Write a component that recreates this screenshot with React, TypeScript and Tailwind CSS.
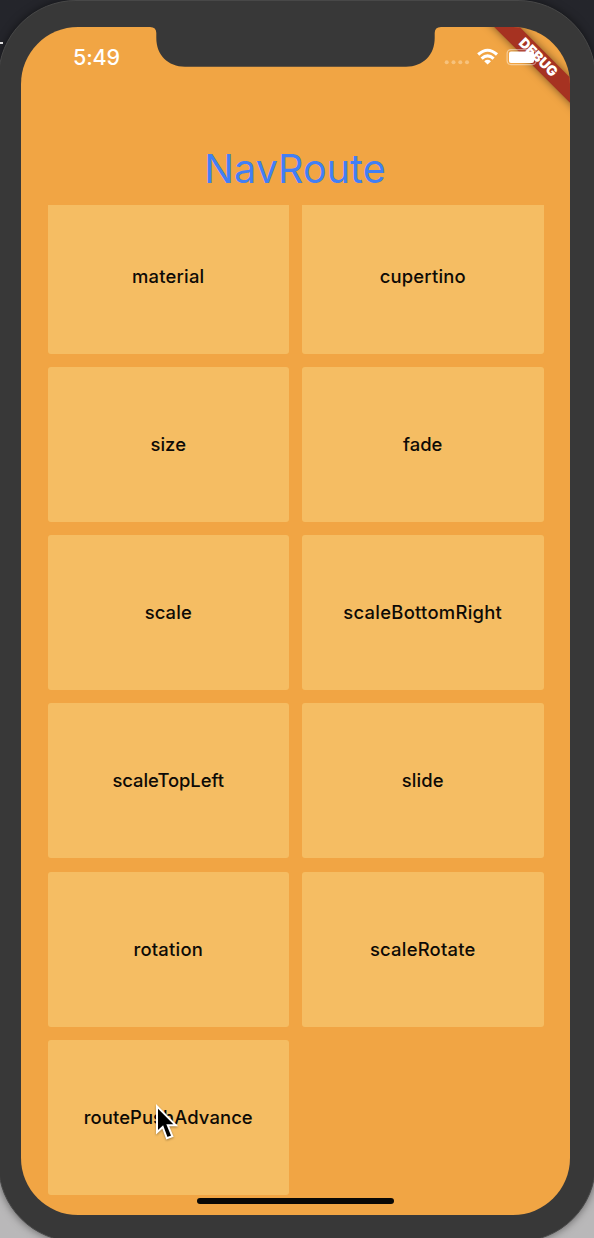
const routes = [
  { name: 'material', spacing: 'tracking-[0.2px]' },
  { name: 'cupertino', spacing: 'tracking-[0.2px]' },
  { name: 'size', spacing: 'tracking-[0.05px]' },
  { name: 'fade', spacing: 'tracking-[0.05px]' },
  { name: 'scale', spacing: 'tracking-[0.1px]' },
  { name: 'scaleBottomRight', spacing: 'tracking-[0.28px]' },
  { name: 'scaleTopLeft', spacing: 'tracking-[-0.04px]' },
  { name: 'slide', spacing: 'tracking-[0.15px]' },
  { name: 'rotation', spacing: 'tracking-[0.24px]' },
  { name: 'scaleRotate', spacing: 'tracking-[0.24px]' },
  { name: 'routePushAdvance', spacing: 'tracking-[0.1px]' },
];

function Notch() {
  return (
    <svg className="h-10 w-[297px] shrink-0" viewBox="0 0 297 40">
      <path
        d="M0 0H3Q9.3 0 9.3 6V11C9.3 28 21 39.7 38 39.7H259C276 39.7 287.7 28 287.7 11V6Q287.7 0 294 0Z"
        fill="#383838"
      />
    </svg>
  );
}

function StatusIcons() {
  return (
    <svg className="relative z-10 mt-4 -ml-1 h-7 w-[105px] shrink-0" viewBox="0 0 105 28">
      <g fill="#f7c27c">
        <circle cx="6.7" cy="19.2" r="2" />
        <circle cx="13.5" cy="19.2" r="2" />
        <circle cx="20.3" cy="19.2" r="2" />
        <circle cx="27" cy="19.2" r="2" />
      </g>
      <g fill="none" stroke="#fff" strokeWidth="3.1">
        <path d="M38.2 11.5Q47.6 3 57 11.5" />
        <path d="M41.6 15.6Q47.6 10.1 53.6 15.6" />
      </g>
      <path d="M44.2 18.3Q47.6 15.4 51 18.3L47.6 21.6Z" fill="#fff" />
      <rect
        x="67.1"
        y="6.6"
        width="29"
        height="15"
        rx="3.8"
        fill="none"
        stroke="#fff"
        strokeOpacity="0.45"
        strokeWidth="1.2"
      />
      <path d="M98 11.4Q100 11.9 100 14.1Q100 16.3 98 16.9Z" fill="#fff" fillOpacity="0.4" />
      <rect x="69" y="8.4" width="25" height="11.5" rx="2" fill="#fff" />
    </svg>
  );
}

function Cursor() {
  return (
    <svg
      className="absolute left-[154px] top-[1101px] drop-shadow-[0_1px_1px_rgba(0,0,0,0.35)]"
      width="28"
      height="42"
      viewBox="0 0 28 42"
    >
      <path d="M3 5.4V31.3L8.7 26L12.9 37.3L18.3 35.2L13.8 24.3H21.8Z" fill="#000" stroke="#fff" strokeWidth="2" />
    </svg>
  );
}

export default function App() {
  return (
    <div className="relative flex h-[1238px] w-[594px] items-start justify-center overflow-hidden bg-linear-to-b from-[#24252b] from-50% to-[#b9b8b9] to-90% font-['Inter',sans-serif]">
      <div className="absolute left-0 top-[42px] h-[2px] w-[3px] bg-[#dedede]" />
      <div className="flex h-[1242px] w-[598px] shrink-0 flex-col rounded-[78px] border border-[#484848] bg-[#383838] pl-[22px] pt-[26px] shadow-[0_0_8px_rgba(0,0,0,0.5)]">
        <main className="relative flex h-[1188px] w-[549px] flex-col overflow-hidden rounded-[57px] bg-[#f1a544]">
          <header className="flex h-[119px] items-start">
            <time className="w-[126px] shrink-0 pl-[52px] pt-[16px] text-[21.5px] font-medium leading-7 tracking-[-0.1px] text-white">
              5:49
            </time>
            <Notch />
            <StatusIcons />
          </header>
          <h1 className="h-[59px] pr-px text-center text-[39.5px] font-normal leading-[46px] tracking-[0.05px] text-[#427ff5]">
            NavRoute
          </h1>
          <section className="flex min-h-0 flex-1 items-end justify-center overflow-hidden pb-[20px]">
            <div className="grid w-[496px] shrink-0 grid-cols-2 gap-x-[13px] gap-y-[13.3px]">
              {routes.map(({ name, spacing }) => (
                <button
                  key={name}
                  className={`flex h-[155px] items-center justify-center rounded-[3px] bg-[#f5bd63] pb-px text-[18.4px] font-medium leading-6 text-[#0d0a06] ${spacing}`}
                >
                  {name}
                </button>
              ))}
            </div>
          </section>
          <div className="absolute right-[-68.5px] top-[22.5px] h-[17.5px] w-[200px] rotate-45 bg-[#a63221] shadow-[0_0_9px_rgba(0,0,0,0.5)]" />
          <div className="absolute right-[-68.5px] top-[22.5px] z-20 flex h-[17.5px] w-[200px] rotate-45 items-center justify-center pr-[3px] text-[13.8px] font-black leading-none text-white">
            DEBUG
          </div>
          <div className="absolute bottom-[11px] left-[176px] h-[6.5px] w-[197px] rounded-full bg-[#090806]" />
        </main>
      </div>
      <Cursor />
    </div>
  );
}
